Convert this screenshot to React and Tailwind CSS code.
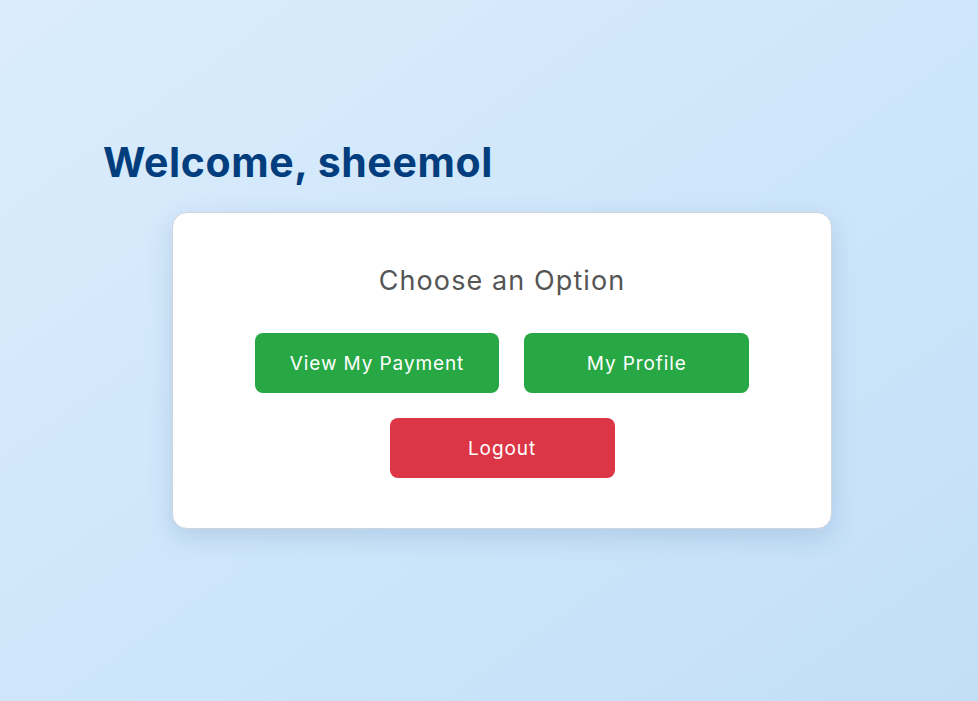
import React from 'react';

const Dashboard = () => {
  const user = 'sheemol';

  return (
    <div className="min-h-[701px] w-full bg-gradient-to-br from-[#dbedfc] to-[#c2dff8] pt-[136px] pl-[103px] font-['Inter',sans-serif]">
      <h1 className="text-[41px] font-bold leading-[52px] tracking-[0.6px] text-[#023e7d]">Welcome, {user}</h1>

      {/* Options card */}
      <div className="mt-[24px] ml-[69px] w-[660px] rounded-[15px] border border-[#cdd5de] bg-white px-8 pt-[50px] pb-[50px] shadow-[0_8px_24px_rgba(80,120,170,0.22)]">
        <h2 className="text-center text-[27px] font-normal leading-[36px] tracking-[1.1px] text-[#555555]">Choose an Option</h2>
        <div className="mt-[34px] flex justify-center gap-[25px]">
          <button className="h-[60px] min-w-[225px] rounded-lg bg-[#28a745] px-[35px] pt-[3px] text-[19px] tracking-[0.9px] text-white">
            View My Payment
          </button>
          <button className="h-[60px] min-w-[225px] rounded-lg bg-[#28a745] px-[35px] pt-[3px] text-[19px] tracking-[0.9px] text-white">
            My Profile
          </button>
        </div>
        <div className="mt-[25px] flex justify-center">
          <button className="h-[60px] min-w-[225px] rounded-lg bg-[#dc3545] px-[35px] pt-[3px] text-[19px] tracking-[0.9px] text-white">
            Logout
          </button>
        </div>
      </div>
    </div>
  );
};

export default Dashboard;
